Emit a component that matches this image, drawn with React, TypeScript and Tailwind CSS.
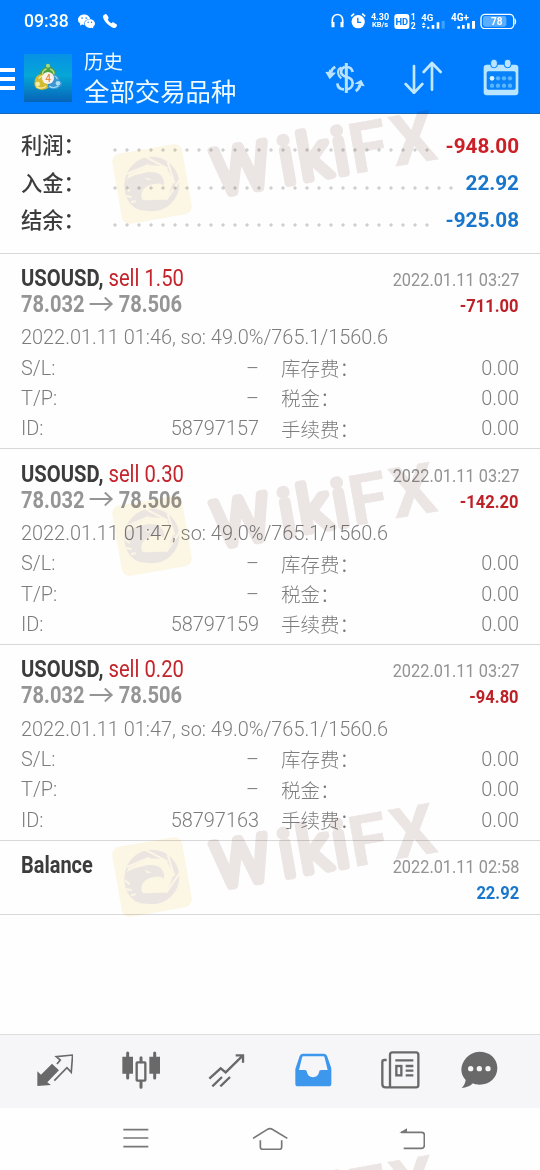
import { IoLogoWechat, IoCall } from "react-icons/io5";

const trades = [
  { volume: "1.50", profit: "-711.00", time: "01:46", id: "58797157" },
  { volume: "0.30", profit: "-142.20", time: "01:47", id: "58797159" },
  { volume: "0.20", profit: "-94.80", time: "01:47", id: "58797163" },
];

const summary = [
  { label: "利润：", value: "-948.00", color: "text-[#cb2027]", dots: "w-[328px]" },
  { label: "入金：", value: "22.92", color: "text-[#1876cc]", dots: "w-[352px]" },
  { label: "结余：", value: "-925.08", color: "text-[#1876cc]", dots: "w-[328px]" },
];

const StatusBar = () => {
  return (
    <div className="flex h-[42px] items-center pl-6 pr-[23px]">
      <span className="mt-px w-[46px] text-[17.6px] font-medium leading-none">09:38</span>
      <IoLogoWechat className="ml-[8px] text-[17px]" />
      <IoCall className="ml-[7px] text-[16px]" />
      <div className="ml-auto flex items-center">
        {/* Headphones */}
        <svg viewBox="183 38 39 48" className="h-4 w-[13px]" fill="none" stroke="currentColor">
          <path d="M187 68V58a15.500 15.500 0 0 1 31 0V68" strokeWidth="5" />
          <path d="M189 65v16M216 65v16" strokeWidth="9" />
        </svg>
        {/* Alarm */}
        <svg viewBox="238 40 47 48" className="ml-[6px] h-4 w-[16px]" fill="none">
          <circle cx="262" cy="66" r="20" fill="white" />
          <path d="M241 50l9-8M283 50l-9-8" stroke="white" strokeWidth="5" />
          <path d="M261 54v14h10" stroke="#007dff" strokeWidth="4" />
        </svg>
        <div className="ml-[4px] w-[20px] text-center text-[9px] font-bold leading-[8px]">
          <div>4.30</div>
          <div className="text-[7.5px]">KB/s</div>
        </div>
        {/* HD */}
        <svg viewBox="372 38 66 50" className="ml-[4px] h-[16.700px] w-[22px]">
          <rect x="373" y="41" width="45" height="45" rx="9" fill="white" />
          <text x="395.500" y="74" textAnchor="middle" fontSize="28" fontWeight="700" fill="#007dff">HD</text>
          <text x="430" y="60" textAnchor="middle" fontSize="26" fontWeight="700" fill="white">1</text>
          <text x="430" y="85" textAnchor="middle" fontSize="26" fontWeight="700" fill="white">2</text>
        </svg>
        <svg viewBox="453 38 72 50" className="ml-[5px] h-[16.700px] w-[24px]" fill="white">
          <text x="454" y="61" fontSize="29" fontWeight="700">4G</text>
          <path d="M455 73l6-7 6 7zM455 77l6 7 6-7zM471 79h7v6h-7zM485 74h8v11h-8zM500 66h8v19h-8z" />
          <path d="M515 62h9v23h-9z" fill="#3ea2ff" />
        </svg>
        <svg viewBox="543 38 75 50" className="ml-[6px] h-[16.700px] w-[25px]" fill="white">
          <text x="543" y="61" fontSize="30" fontWeight="700">4G+</text>
          <path d="M562 78h8v7h-8zM576 74h8v11h-8zM591 69h8v16h-8zM606 62h9v23h-9z" />
        </svg>
        {/* Battery */}
        <svg viewBox="629 38 111 50" className="ml-[4px] h-[16.700px] w-[37px]">
          <rect x="632" y="42" width="98" height="43" rx="12" fill="none" stroke="white" strokeWidth="4" />
          <path d="M734 55q5 8 0 17z" fill="white" stroke="white" strokeWidth="2" />
          <rect x="638" y="47" width="70" height="32" rx="7" fill="#59aeff" />
          <text x="679" y="74" textAnchor="middle" fontSize="30" fontWeight="700" fill="white">78</text>
        </svg>
      </div>
    </div>
  );
};

const AppLogo = () => {
  return (
    <svg viewBox="0 0 144 144" className="ml-[9px] h-12 w-12">
      <defs>
        <linearGradient id="sky" x1="0" y1="0" x2="0" y2="1">
          <stop offset="0" stopColor="#0691e6" />
          <stop offset="0.45" stopColor="#06a6d6" />
          <stop offset="1" stopColor="#0763b8" />
        </linearGradient>
      </defs>
      <rect width="144" height="144" fill="url(#sky)" />
      <path d="M48 68c-3-14 6-25 17-28-4-14 16-17 14-1 11 4 20 15 17 29l-6 8H56z" fill="#4f9f45" />
      <path d="M55 62q0-14 13-17M90 62q0-13-12-17" fill="none" stroke="#b5de83" strokeWidth="4" />
      <circle cx="72" cy="35" r="6" fill="#a5dc86" />
      <path d="M32 84c0-16 12-25 27-24l16 40c-8 9-30 10-38 2-5-3-7-11-5-18z" fill="#d3bb35" />
      <path d="M37 98c10 6 22 5 30-2M44 74q4-7 12-8" stroke="#f4e991" strokeWidth="4" fill="none" />
      <circle cx="41" cy="90" r="7" fill="#f5eda0" />
      <path d="M84 60c16 1 23 9 23 20 9 3 9 15 0 18-5 9-27 9-37 1z" fill="#3d96d2" />
      <path d="M76 97q13 8 27-1M92 66q8 4 8 10" stroke="#9bd7f4" strokeWidth="4" fill="none" />
      <circle cx="102" cy="88" r="7" fill="#a9ddf3" />
      <circle cx="72" cy="72" r="18" fill="#f7f3ea" />
      <text x="72" y="83" textAnchor="middle" fontSize="30" fontWeight="500" fill="#ef8a45">4</text>
    </svg>
  );
};

const Header = () => {
  return (
    <header className="h-[114px] border-b border-[#1768bd] bg-[#007dff] text-white">
      <StatusBar />
      <div className="flex h-[71px] items-center pr-[21px]">
        <div className="mt-[3px] flex w-[15px] flex-col gap-[5px]">
          <span className="h-[4px] bg-white" />
          <span className="h-[4px] bg-white" />
          <span className="h-[4px] bg-white" />
        </div>
        <AppLogo />
        <div className="ml-3 mt-px flex flex-col text-[#eefaff]">
          <span className="h-[28px] text-[19.400px] leading-[30px]">历史</span>
          <span className="h-[33px] text-[25.400px] leading-[33px]">全部交易品种</span>
        </div>
        {/* Currency */}
        <svg viewBox="162 180 126 100" className="ml-auto h-[33.300px] w-[42px]" fill="none" stroke="#b9e2ff" strokeWidth="8">
          <path d="M248 213c-2-10-8-15-18-15h-6M229 228c14 3 19 9 19 18 0 12-8 19-20 19M229 228c-11-4-16-8-16-16 0-7 5-12 11-14M222 265c-12 0-19-6-20-18" />
          <path d="M229 186v90" strokeWidth="9" />
          <path d="M214 199q-10 4-10 14 0 12 10 19" strokeWidth="6" />
          <path d="M196 198q-11 4-13 16M257 270q10-5 12-18" strokeWidth="8" />
          <path d="M166 213l10-1 2-8 5 10 15 1-19 20zM284 256l-10-2-2 8-5-12-14-2 21-12z" fill="#b9e2ff" stroke="none" />
        </svg>
        {/* Sort */}
        <svg viewBox="402 182 114 100" className="ml-[38px] h-[33.300px] w-[38px]" fill="none" stroke="#c2e8ff" strokeWidth="8" strokeLinecap="round" strokeLinejoin="round">
          <path d="M432 197v81M407 251l25 27 25-27M486 268v-79M461 215l25-27 26 27" />
        </svg>
        {/* Calendar */}
        <svg viewBox="640 176 108 110" className="ml-[41px] h-[36.700px] w-[36px]">
          <rect x="642" y="193" width="104" height="92" rx="9" fill="#b9e5ff" />
          <rect x="651" y="213" width="87" height="55" rx="5" fill="#0a83fa" />
          <rect x="663" y="177" width="20" height="25" rx="9" fill="#b9e5ff" stroke="#007dff" strokeWidth="3" />
          <rect x="704" y="177" width="20" height="25" rx="9" fill="#b9e5ff" stroke="#007dff" strokeWidth="3" />
          <circle cx="667" cy="234" r="7" fill="#d9f5ff" />
          <g fill="#58b6ff">
            <circle cx="685" cy="234" r="6.500" />
            <circle cx="703" cy="234" r="6.500" />
            <circle cx="721" cy="234" r="6.500" />
            <circle cx="667" cy="256" r="6.500" />
            <circle cx="685" cy="256" r="6.500" />
            <circle cx="703" cy="256" r="6.500" />
            <circle cx="721" cy="256" r="6.500" />
          </g>
        </svg>
      </div>
    </header>
  );
};

const Summary = () => {
  return (
    <section className="h-[139.600px] border-b border-[#d8d8d8] pl-[21px] pr-[21px] pt-[13.500px]">
      {summary.map((row) => (
        <div key={row.label} className="flex h-[37.400px] items-center">
          <span className="w-[88px] text-[21.300px] font-medium text-[#3c3c3c]">{row.label}</span>
          <span
            className={`mt-[8px] h-[4px] shrink-0 bg-[radial-gradient(circle_at_6px_2px,#d0d0d0_1.300px,transparent_2px)] bg-[length:12px_4px] ${row.dots}`}
          />
          <span className={`ml-auto text-[20.700px] font-bold ${row.color}`}>{row.value}</span>
        </div>
      ))}
    </section>
  );
};

const DetailRow = ({ name, value, label }: { name: string; value: string; label: string }) => {
  return (
    <div className="flex h-[30.300px] items-center">
      <span className="w-[100px]">{name}</span>
      <span className="w-[138px] text-right">{value}</span>
      <span className="ml-[22px] mt-[2px] text-[19.500px]">{label}</span>
      <span className="ml-auto">0.00</span>
    </div>
  );
};

const Trade = ({ trade }: { trade: (typeof trades)[number] }) => {
  return (
    <section className="h-[195.700px] border-b border-[#d8d8d8] px-[21px] pt-[12px] text-[#939393]">
      <div className="flex h-[26px] items-center justify-between">
        <span className="origin-left scale-x-[0.86] whitespace-nowrap text-[23.500px] font-bold text-[#3c3c3c]">
          USOUSD, <span className="font-normal text-[#c4242b]">sell {trade.volume}</span>
        </span>
        <span className="mt-[3px] origin-right scale-x-[0.86] whitespace-nowrap text-[19px]">2022.01.11 03:27</span>
      </div>
      <div className="flex h-[26px] items-center justify-between">
        <div className="flex origin-left scale-x-[0.855] items-center whitespace-nowrap text-[23.500px] font-bold text-[#959595]">
          78.032
          <svg viewBox="0 0 28 16" className="mx-[6px] h-4 w-[28px]" fill="none" stroke="currentColor" strokeWidth="2.200">
            <path d="M0 7h26M18 0.500l8 6.500-8 6.500" />
          </svg>
          78.506
        </div>
        <span className="mt-[3px] origin-right scale-x-[0.87] text-[19px] font-bold text-[#bd2128]">{trade.profit}</span>
      </div>
      <div className="mt-[5.600px] text-[19.900px] font-light text-[#7c7c7c]">
        <div className="flex h-[30.300px] items-center whitespace-nowrap">
          2022.01.11 {trade.time}, so: 49.0%/765.1/1560.6
        </div>
        <DetailRow name="S/L:" value="–" label="库存费：" />
        <DetailRow name="T/P:" value="–" label="税金：" />
        <DetailRow name="ID:" value={trade.id} label="手续费：" />
      </div>
    </section>
  );
};

const TabBar = () => {
  return (
    <nav className="flex h-[74px] items-center border-t border-[#dedede] bg-[#f6f6f8] pb-[3px] pl-[36.500px] text-[#696969]">
      {/* Quotes */}
      <svg viewBox="110 71 110 99" className="h-[33px] w-[36.600px]">
        <path d="M111 167v-44l11 10 33-33 21 20-35 36 11 8z" fill="currentColor" />
        <path d="M162 151l38-39 13 14 4-52-49 5 12 10-10 12" fill="none" stroke="currentColor" strokeWidth="5" />
      </svg>
      {/* Chart */}
      <svg viewBox="365 62 116 114" className="ml-[48.700px] h-[38px] w-[38.700px]">
        <path d="M366 79h32v51h-32zM447 79h32v51h-32z" fill="currentColor" />
        <path d="M382 68v75M463 68v75M422 82v12M422 153v18" stroke="currentColor" strokeWidth="9" strokeLinecap="round" />
        <rect x="409" y="96" width="26" height="55" rx="2" fill="none" stroke="currentColor" strokeWidth="7" />
      </svg>
      {/* Trade */}
      <svg viewBox="625 66 113 104" className="ml-[47.800px] h-[34.700px] w-[37.700px]" fill="none" stroke="currentColor" strokeWidth="7">
        <path d="M629 143l34-31 15 12 51-50M708 73h22v22M638 166l29-28M662 166l29-28" />
      </svg>
      {/* History */}
      <svg viewBox="75 67 111 102" className="ml-[49.500px] h-[34px] w-[37px]">
        <path fillRule="evenodd" d="M99 69h62q7 0 10 6l13 38v46q0 8-8 8H84q-8 0-8-8v-44l13-39q3-7 10-7zM100 77q-3 0-4 4l-9 37h17q7 0 7 7 2 14 18 15 16-1 18-15 0-7 7-7h19l-9-37q-1-4-4-4z" fill="#3c97ed" />
      </svg>
      {/* News */}
      <svg viewBox="332 62 116 113" className="ml-[48.600px] h-[37.700px] w-[38.700px]" fill="none" stroke="currentColor" strokeWidth="7">
        <path d="M359 171V73q0-7 7-7h71q7 0 7 7v91q0 7-7 7h-91q-10 0-10-10V95q0-6 6-6h7" />
        <path d="M375 90h54M406 107h23M406 121h23M406 135h23" />
        <rect x="378" y="107" width="15" height="28" />
      </svg>
      {/* Messages */}
      <svg viewBox="572 62 111 113" className="ml-[41px] h-[37.700px] w-[37px]">
        <path d="M627 64c31 0 54 20 54 49s-23 50-53 50c-8 0-15-1-20-4-9 9-20 13-34 14 8-8 11-16 12-24-9-9-13-20-13-32 1-24 23-53 54-53z" fill="currentColor" />
        <g fill="#f6f6f8">
          <circle cx="601" cy="115" r="8" />
          <circle cx="627" cy="115" r="8" />
          <circle cx="653" cy="115" r="8" />
        </g>
      </svg>
    </nav>
  );
};

const SystemNav = () => {
  return (
    <div className="flex h-[62px] items-center pl-[122.500px] pb-px text-[#777]">
      <svg viewBox="368 295 78 62" className="h-[20.700px] w-[26px]" fill="none" stroke="currentColor" strokeWidth="5">
        <path d="M369 300h75M369 325h75M369 351h75" />
      </svg>
      <svg viewBox="-54 288 110 71" className="ml-[103.500px] h-[23.700px] w-[36.700px]" fill="none" stroke="currentColor" strokeWidth="5">
        <path d="M-51 322L-9 296q9-6 18 0l43 26M-29 328v20q0 7 7 7h50q7 0 7-7v-20" />
      </svg>
      <svg viewBox="386 290 80 66" className="ml-[110px] h-[22px] w-[26.700px]" fill="none" stroke="currentColor" strokeWidth="5">
        <path d="M392 303h62q8 0 8 8v31q0 9-8 9h-54" />
        <path d="M387 304l23-13v13z" fill="currentColor" stroke="none" />
      </svg>
    </div>
  );
};

// One "WikiFX" stamp, tilted, centred on its badge
const Stamp = ({ y }: { y: number }) => {
  return (
    <g transform={`translate(152 ${y})`}>
      <rect x="-35.500" y="-35.500" width="71" height="71" rx="8" fill="#fdf7e6" transform="rotate(-10)" />
      {/* Eagle in an aperture */}
      <g transform="scale(0.333) translate(-157 -252)">
        <circle cx="157" cy="252" r="82" fill="#ece6e3" />
        <path d="M86 226l62-30 50 3 24 44-18 50-54 8-20 0-50-60z" fill="#fdf7e6" />
        <path d="M74 250l8-14 22-10 38-9c24-4 46 4 50 24 3 6 1 14-2 17-2-6-10-8-20-7-18 1-34 8-42 22-8 20 2 42 22 56-14 6-40 2-54-14-14-12-24-38-22-65z" fill="#ece6e3" />
        <path d="M134 232l22 6-12 3z" fill="#fdf7e6" />
        <path d="M82 222l66-28M136 170l68 36M204 184l20 66M240 240l-38 56M204 296l-64 0M76 262l14 12M80 288l16 4M94 306l14-2" stroke="#fdf7e6" strokeWidth="6" fill="none" />
      </g>
      <g fill="#ece6e4" stroke="#ece6e4" strokeLinejoin="round" strokeLinecap="round" transform="rotate(-10)">
        <text x="62.500 129.500 148.500 184" y="22.500" fontSize="63" fontWeight="300" strokeWidth="8">Wiki</text>
        <text x="200 242.500" y="25" fontSize="70" fontWeight="700" strokeWidth="0.500">FX</text>
      </g>
    </g>
  );
};

const Watermark = () => {
  return (
    <svg viewBox="0 0 540 1170" className="pointer-events-none absolute inset-0 h-full w-full mix-blend-multiply">
      <Stamp y={184} />
      <Stamp y={536} />
      <Stamp y={877} />
      <Stamp y={1229} />
    </svg>
  );
};

const App = () => {
  return (
    <div className="relative flex h-[1170px] w-[540px] flex-col overflow-hidden bg-[#fefefe] font-['Roboto','Noto_Sans_CJK_SC',sans-serif]">
      <Header />
      <main className="flex-1">
        <Summary />
        {trades.map((trade) => (
          <Trade key={trade.id} trade={trade} />
        ))}
        {/* Balance */}
        <section className="h-[74px] border-b border-[#d8d8d8] px-[21px] pt-[12px] text-[#939393]">
          <div className="flex h-[26px] items-center justify-between">
            <span className="origin-left scale-x-[0.85] text-[23.500px] font-bold text-[#3c3c3c]">Balance</span>
            <span className="mt-[3px] origin-right scale-x-[0.86] whitespace-nowrap text-[19px]">2022.01.11 02:58</span>
          </div>
          <div className="flex h-[26px] items-center justify-end">
            <span className="mt-[3px] origin-right scale-x-[0.87] text-[19px] font-bold text-[#1876cc]">22.92</span>
          </div>
        </section>
      </main>
      <TabBar />
      <SystemNav />
      <Watermark />
    </div>
  );
};

export default App;
